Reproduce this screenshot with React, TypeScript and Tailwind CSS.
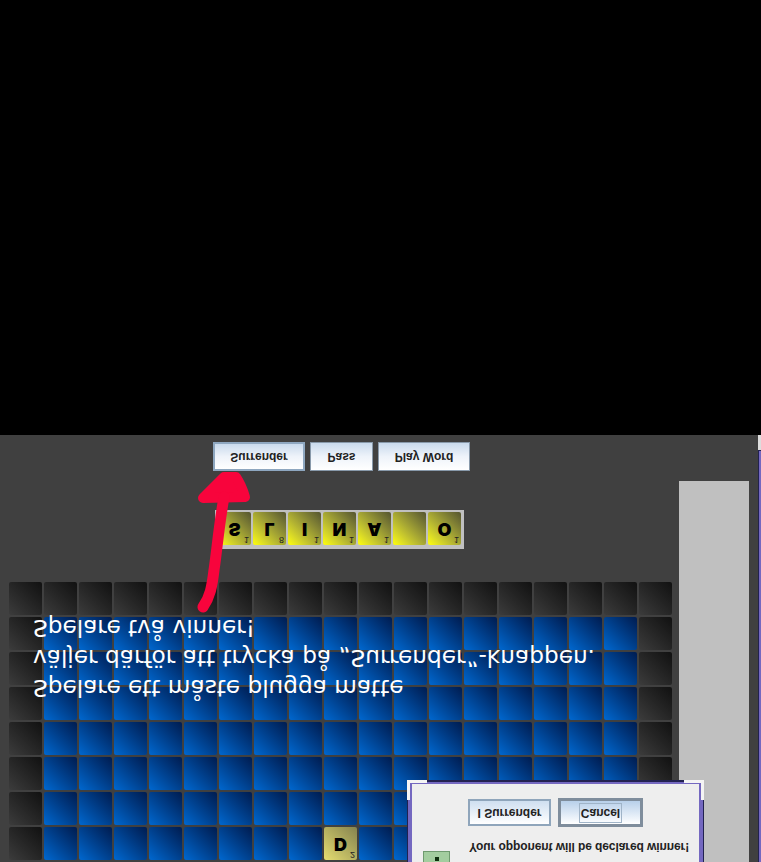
const rackTiles = [
  { letter: "S", points: "1" },
  { letter: "L", points: "8" },
  { letter: "I", points: "1" },
  { letter: "N", points: "1" },
  { letter: "A", points: "1" },
  { letter: "", points: "" },
  { letter: "O", points: "1" },
];

const ROWS = 8;
const COLS = 19;

function Flip({ children, className = "" }: { children: React.ReactNode; className?: string }) {
  return <span className={`inline-block -scale-y-100 ${className}`}>{children}</span>;
}

function GameButton({ label, className = "" }: { label: string; className?: string }) {
  return (
    <button
      className={`flex h-[29px] items-center justify-center bg-gradient-to-b from-[#c9daec] via-[#eef3fa] to-white text-[12px] font-bold text-[#222] ${className}`}
    >
      <Flip>{label}</Flip>
    </button>
  );
}

function Tile({ letter, points, pale }: { letter: string; points: string; pale?: boolean }) {
  return (
    <div
      className={`relative flex h-[33px] w-[33px] items-center justify-center rounded-[2px] bg-gradient-to-tr ${
        pale ? "from-[#e6de70] to-[#85834f]" : "from-[#ffff00] to-[#55552f]"
      }`}
    >
      <Flip className="font-['Inter'] text-[18px] leading-none font-black text-black">{letter}</Flip>
      {points && (
        <Flip className="absolute right-[2px] bottom-[1px] text-[9px] leading-none font-normal text-[#222]">
          {points}
        </Flip>
      )}
    </div>
  );
}

function BoardCell({ row, col }: { row: number; col: number }) {
  if (row === 7 && col === 9) return <Tile letter="D" points="2" pale />;
  const isBlue = row > 0 && col > 0 && col < COLS - 1;
  return (
    <div
      className={`h-[33px] w-[33px] rounded-[2px] bg-gradient-to-tr ${
        isBlue ? "from-[#0068d0] to-[#001c50]" : "from-[#3c3c3c] to-[#111111]"
      }`}
    />
  );
}

function SurrenderDialog() {
  return (
    <div className="absolute top-[345px] left-[407px] h-[90px] w-[297px] border-t-2 border-r border-l border-[#222250] bg-[#7468c0] pt-[2px] pr-[4px] pl-[4px]">
      {/* white corners of the window frame */}
      <div className="absolute -top-[2px] -left-px h-[20px] w-[20px] border-t-[3px] border-l-[3px] border-[#f4f4f4]" />
      <div className="absolute -top-[2px] -right-px h-[20px] w-[20px] border-t-[3px] border-r-[3px] border-[#f4f4f4]" />
      <div className="flex h-full flex-col bg-[#eeeeee]">
        <div className="mt-[14px] flex items-center gap-[7px] pl-[56px]">
          <button className="flex h-[27px] w-[83px] items-center justify-center border-2 border-[#8fa5bb] bg-gradient-to-b from-[#cfdff0] to-white text-[12px] font-bold text-[#222]">
            <Flip>I Surrender</Flip>
          </button>
          <button className="flex h-[29px] w-[85px] items-center justify-center border-[3px] border-[#7f8d9c] bg-gradient-to-b from-[#b8d0ea] to-white text-[12px] font-bold text-[#222]">
            <Flip className="border border-[#a0b4c8] px-[1px]">Cancel</Flip>
          </button>
        </div>
        <div className="mt-[13px] flex items-start pl-[11px]">
          <div className="mt-[11px] flex h-[20px] w-[27px] shrink-0 flex-col items-center border border-[#6f9a6f] bg-[#a3cd9f] pt-[5px]">
            <div className="h-[4px] w-[4px] bg-[#10300f]" />
            <div className="mt-[2px] h-[6px] w-[3px] bg-[#10300f]" />
          </div>
          <div className="ml-[19px] text-[12px] leading-[14px] font-bold tracking-[-0.08px] whitespace-nowrap text-[#222]">
            <Flip>Your opponent will be declared winner!</Flip>
          </div>
        </div>
      </div>
    </div>
  );
}

export default function App() {
  return (
    <div
      className="flex h-[862px] w-[761px] flex-col overflow-hidden bg-black"
      style={{ fontFamily: '"Liberation Sans", Arial, sans-serif' }}
    >
      <div className="h-[435px] shrink-0 bg-black" />

      <div className="relative flex flex-1 bg-[#404040]">
        <div className="w-[679px] shrink-0 pt-[7px]">
          {/* buttons */}
          <div className="ml-[213px] flex gap-[5px]">
            <GameButton label="Surrender" className="w-[92px] border-2 border-[#8ea7c0]" />
            <GameButton label="Pass" className="w-[63px] border border-[#8899aa]" />
            <GameButton label="Play Word" className="w-[92px] border border-[#8899aa]" />
          </div>

          {/* rack */}
          <div className="mt-[39px] ml-[215px] flex h-[39px] w-[249px] gap-[2px] bg-[#c0c0c0] pt-[2px] pl-[3px]">
            {rackTiles.map((t, i) => (
              <Tile key={i} letter={t.letter} points={t.points} />
            ))}
          </div>

          {/* board */}
          <div className="mt-[33px] ml-[9px] grid w-[663px] grid-cols-[repeat(19,33px)] gap-[2px]">
            {Array.from({ length: ROWS }).map((_, row) =>
              Array.from({ length: COLS }).map((_, col) => (
                <BoardCell key={`${row}-${col}`} row={row} col={col} />
              )),
            )}
          </div>
        </div>

        {/* score panel */}
        <div className="mt-[46px] w-[70px] bg-[#c0c0c0]" />

        {/* next window at the right edge */}
        <div className="ml-auto flex w-[3px] flex-col">
          <div className="h-[15px] bg-[#dddddd]" />
          <div className="h-px bg-[#222250]" />
          <div className="flex-1 border-l border-[#222250] bg-[#7468c0]" />
        </div>

        {/* annotation */}
        <div className="absolute top-[178px] left-[33px] -scale-y-100 font-['DejaVu_Sans'] text-[23.2px] leading-[30px] whitespace-nowrap text-white">
          <div>Spelare ett måste plugga matte</div>
          <div>väljer därför att trycka på „Surrender”-knappen.</div>
          <div>Spelare två vinner!</div>
        </div>

        <svg className="absolute top-0 left-0" width="761" height="427" viewBox="0 0 761 427">
          <path
            d="M224 42 L236 42 C240 48 243 55 245 62 L203 63 C210 56 217 49 224 42 Z"
            fill="#f8043c"
            stroke="#f8043c"
            strokeWidth="10"
            strokeLinejoin="round"
          />
          <path
            d="M224 62 C219 90 217 115 214 135 C212 152 210 162 203 172"
            fill="none"
            stroke="#f8043c"
            strokeWidth="11"
            strokeLinecap="round"
          />
        </svg>

        <SurrenderDialog />
      </div>
    </div>
  );
}
